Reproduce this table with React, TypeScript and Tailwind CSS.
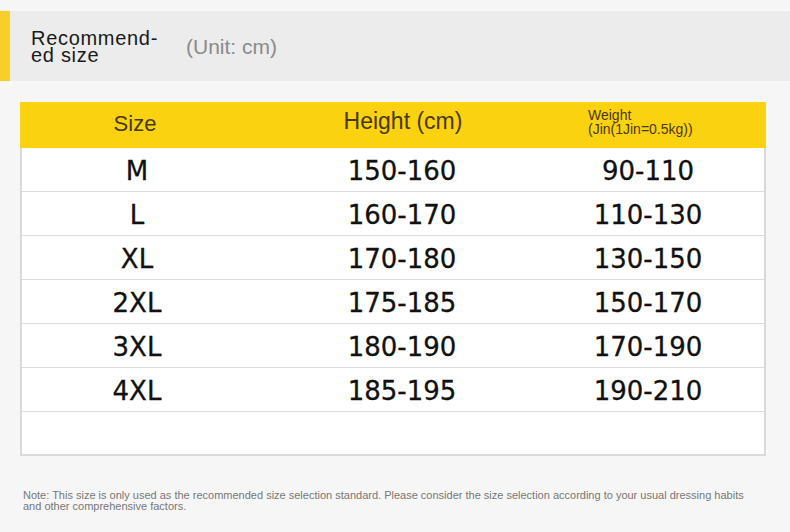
import React from "react";

const rows = [
  ["M", "150-160", "90-110"],
  ["L", "160-170", "110-130"],
  ["XL", "170-180", "130-150"],
  ["2XL", "175-185", "150-170"],
  ["3XL", "180-190", "170-190"],
  ["4XL", "185-195", "190-210"],
];

export default function App() {
  return (
    <div
      className="w-[790px] h-[532px] bg-[#f6f6f6] overflow-hidden flex flex-col"
      style={{ fontFamily: '"Liberation Sans", Arial, sans-serif' }}
    >
      <div className="mt-[11px] h-[70px] flex bg-[#ececec]">
        <div className="w-[10px] bg-[#f8cf2a]" />
        <div className="pl-[21px] pt-[1px] flex items-center">
          <div className="text-[20px] leading-[17px] text-[#1a1a1a] tracking-[0.7px] w-[140px]">
            Recommend-
            <br />
            ed size
          </div>
          <div className="ml-[15px] text-[21px] text-[#8a8a8a]">(Unit: cm)</div>
        </div>
      </div>

      <div className="ml-[20px] mt-[21px] w-[746px] bg-white border-x-2 border-b-2 border-[#d9d9d9]">
        <div className="h-[46px] bg-[#fbd20f] grid grid-cols-[228px_310px_1fr] items-center text-[#4a3808] -mx-[2px]">
          <div className="text-center text-[22px] pl-[2px] pb-[4px]">Size</div>
          <div className="text-center text-[23px] pb-[7px]">Height (cm)</div>
          <div className="pl-[30px] text-[14px] leading-[14px] pb-[6px]">
            Weight
            <br />
            (Jin(1Jin=0.5kg))
          </div>
        </div>
        {rows.map((r) => (
          <div
            key={r[0]}
            className="h-[44px] grid grid-cols-[228px_310px_1fr] items-center border-b border-[#dcdcdc] text-[26px] text-[#111] pt-[3px] [-webkit-text-stroke:0.3px_#111]"
            style={{ fontFamily: '"DejaVu Sans", sans-serif' }}
          >
            <div className="text-center pl-[2px]">{r[0]}</div>
            <div className="text-center pr-[6px]">{r[1]}</div>
            <div className="text-center pr-[28px]">{r[2]}</div>
          </div>
        ))}
        <div className="h-[42px]" />
      </div>

      <div className="ml-[23px] mt-[34px] w-[730px] text-[11px] leading-[11px] text-[#777]">
        Note: This size is only used as the recommended size selection standard. Please consider the size selection according to your usual dressing habits and other comprehensive factors.
      </div>
    </div>
  );
}
